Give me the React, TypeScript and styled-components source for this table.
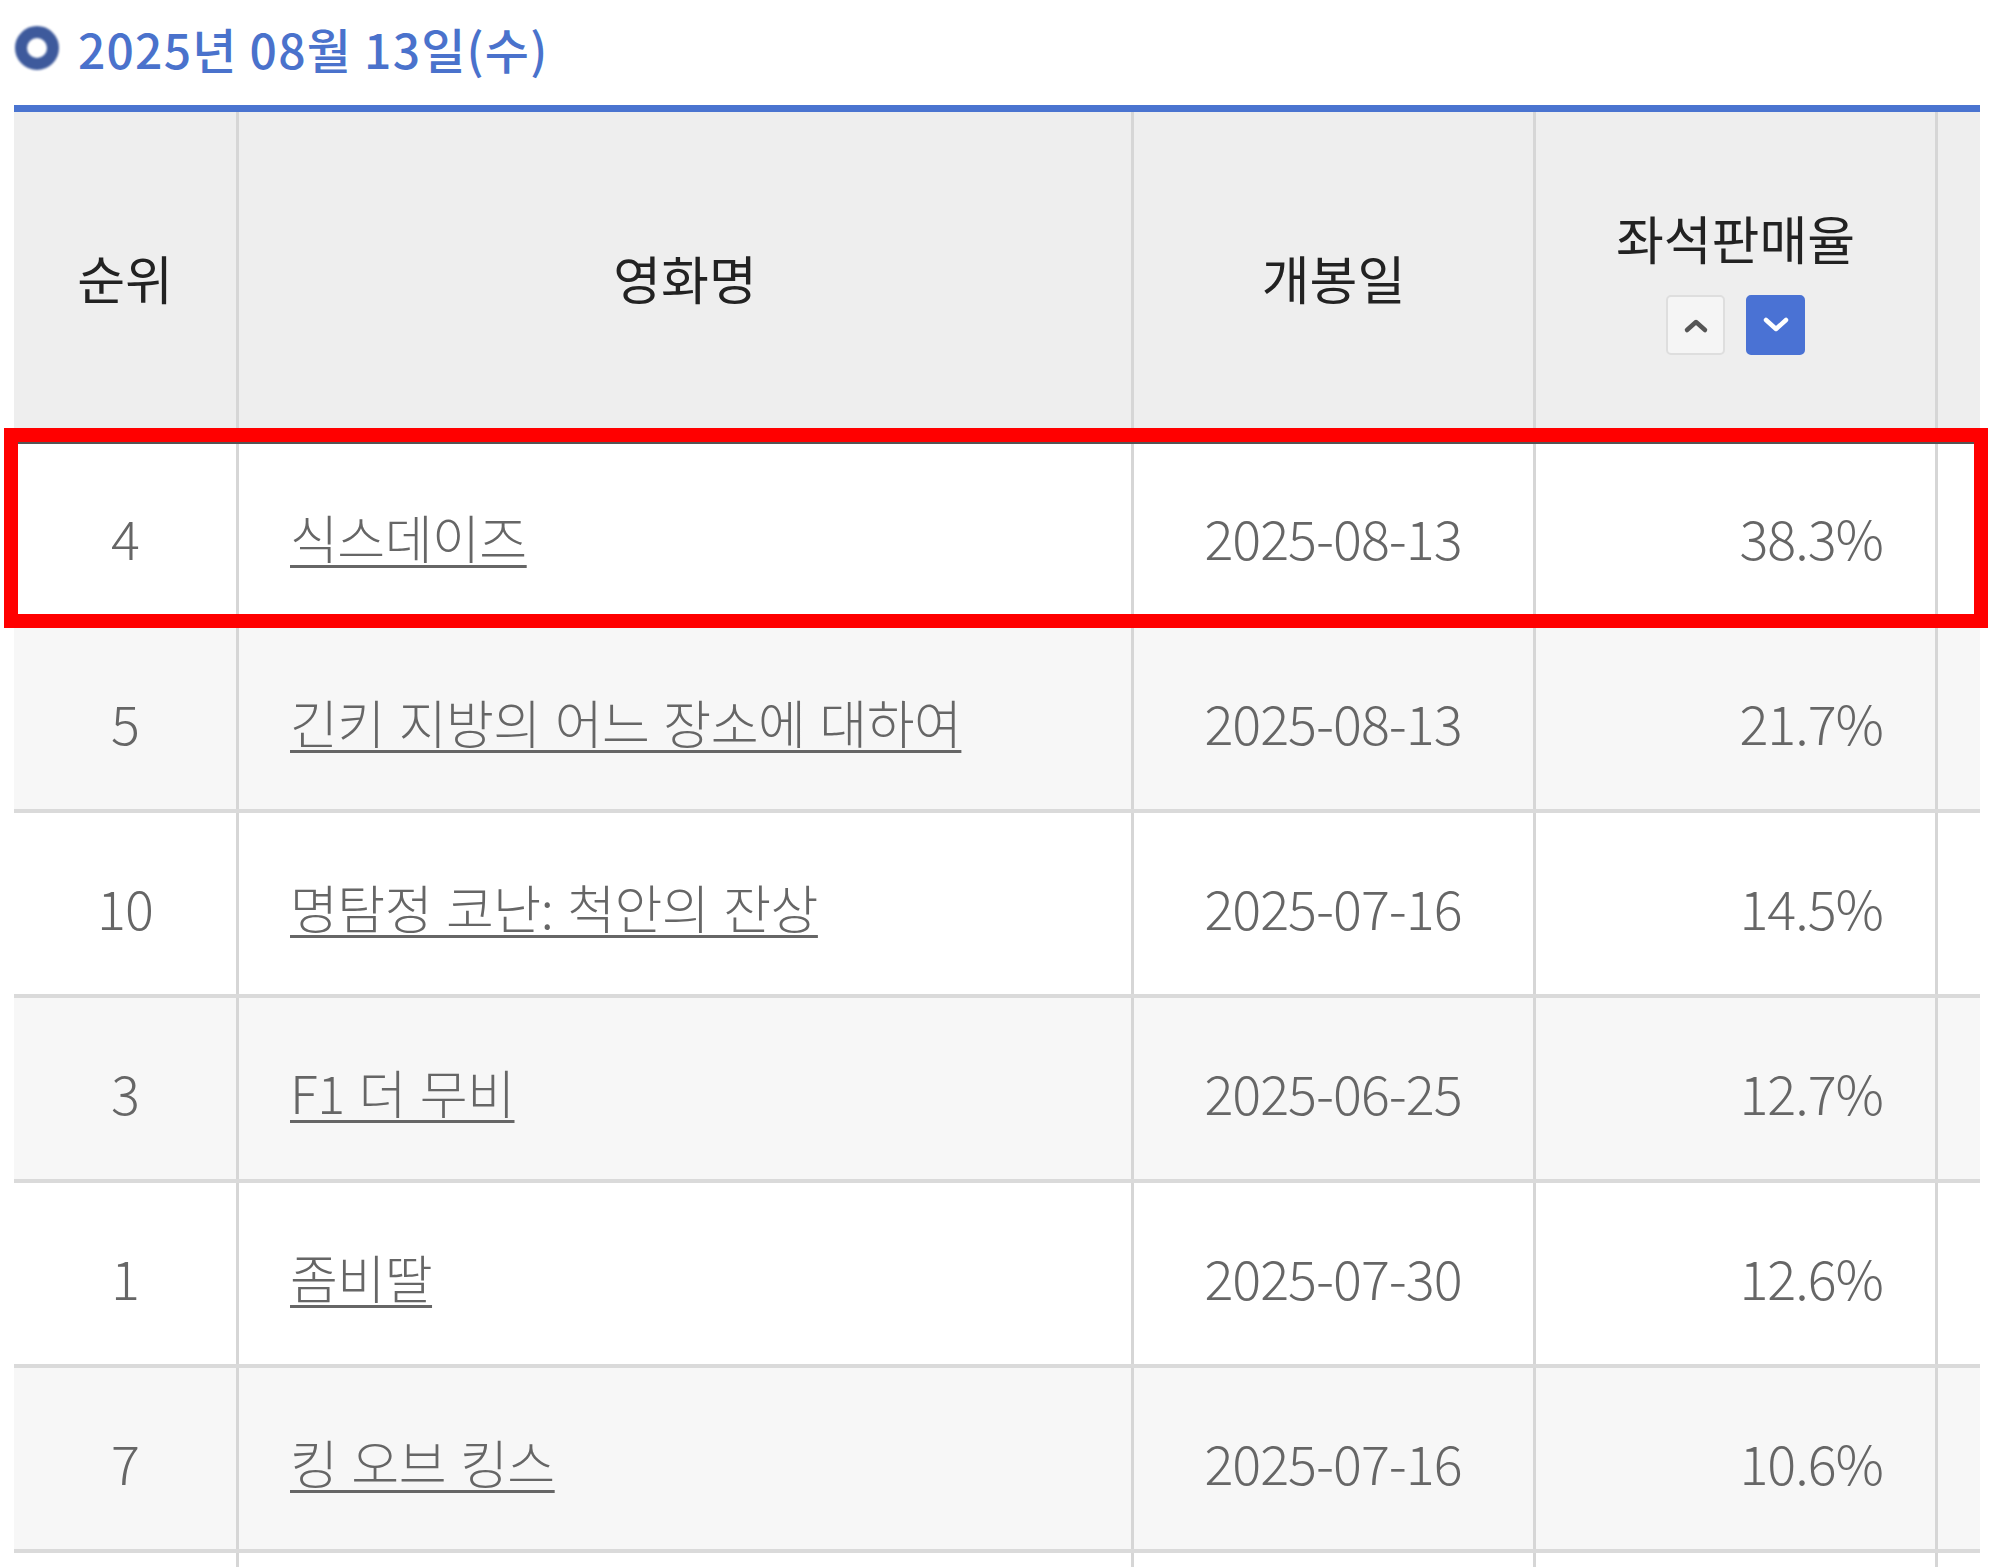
import React from 'react';
import styled, { createGlobalStyle } from 'styled-components';

const GlobalStyle = createGlobalStyle`
  html, body {
    margin: 0;
    padding: 0;
    background: #ffffff;
    overflow: hidden;
  }
  body {
    font-family: "Noto Sans CJK KR", "Noto Sans", sans-serif;
  }
  * {
    box-sizing: border-box;
  }
`;

const COLUMNS = '222px 895px 402px 402px 45px';

const Page = styled.div`
  width: 1989px;
  height: 1567px;
  padding: 0 9px 0 14px;
  overflow: hidden;
`;

const TitleBar = styled.div`
  display: flex;
  align-items: center;
  gap: 18px;
  height: 105px;
  padding-left: 0;
  padding-bottom: 9px;
`;

const DateTitle = styled.h2`
  margin: 0;
  font-size: 48px;
  font-weight: 500;
  color: #4a72cc;
  letter-spacing: 1.2px;
`;

const Table = styled.div`
  border-top: 7px solid #4a74d0;
`;

const HeadRow = styled.div`
  display: grid;
  grid-template-columns: ${COLUMNS};
  height: 331px;
  background: #eeeeee;
`;

const HeadCell = styled.div<{ $first?: boolean }>`
  display: flex;
  flex-direction: column;
  align-items: center;
  justify-content: center;
  gap: 20px;
  border-left: ${p => (p.$first ? 'none' : '3px solid #d6d6d6')};
  font-size: 52px;
  color: #222222;
`;

const SortButtons = styled.div`
  display: flex;
  gap: 21px;
`;

const SortButton = styled.button<{ $active?: boolean }>`
  width: 59px;
  height: 60px;
  padding: 0;
  display: flex;
  align-items: center;
  justify-content: center;
  border-radius: 5px;
  border: 2px solid ${p => (p.$active ? '#4a72d4' : '#dedede')};
  background: ${p => (p.$active ? '#4a72d4' : '#f5f5f5')};
  cursor: pointer;
`;

const Body = styled.div`
  position: relative;
`;

const RowWrap = styled.div`
  position: relative;
`;

const Row = styled.div<{ $shade?: boolean }>`
  display: grid;
  grid-template-columns: ${COLUMNS};
  height: 185px;
  border-bottom: 4px solid #dadada;
  background: ${p => (p.$shade ? '#f7f7f7' : '#ffffff')};
`;

const Cell = styled.div<{ $align?: 'left' | 'center' | 'right'; $first?: boolean }>`
  display: flex;
  align-items: center;
  justify-content: ${p =>
    p.$align === 'left' ? 'flex-start' : p.$align === 'right' ? 'flex-end' : 'center'};
  padding: 6px 52px 0 51px;
  border-left: ${p => (p.$first ? 'none' : '3px solid #d6d6d6')};
  font-size: 54px;
  font-weight: 300;
  color: #666666;
  letter-spacing: -1px;
  white-space: nowrap;
`;

const RankCell = styled(Cell)`
  padding: 6px 0 0 0;
`;

const MovieLink = styled.a`
  color: #666666;
  text-decoration: underline;
  text-decoration-thickness: 3px;
  text-underline-offset: 6px;
  letter-spacing: -0.5px;
  word-spacing: 3px;
  font-size: 52px;
`;

// 빨간 강조 박스 (첫 번째 행 위에 겹침)
const Highlight = styled.div`
  position: absolute;
  top: -15px;
  left: -10px;
  right: -8px;
  bottom: 0;
  border: 14px solid #ff0000;
  box-shadow: inset 0 2px 0 #555555;
  pointer-events: none;
`;

const RingIcon = () => (
  <svg width="46" height="46" viewBox="0 0 46 46" style={{ filter: 'blur(0.8px)' }}>
    <circle cx="23" cy="23" r="16" fill="none" stroke="#3e5a9c" strokeWidth="12" />
  </svg>
);

const Chevron = ({ up, color }: { up?: boolean; color: string }) => (
  <svg width="30" height="20" viewBox="0 0 30 20">
    <polyline
      points={up ? '6,15 15,7 24,15' : '5,5 15,14 25,5'}
      fill="none"
      stroke={color}
      strokeWidth="4.5"
      strokeLinecap="round"
      strokeLinejoin="round"
    />
  </svg>
);

type Movie = {
  rank: number;
  title: string;
  openDate: string;
  rate: string;
};

const movies: Movie[] = [
  { rank: 4, title: '식스데이즈', openDate: '2025-08-13', rate: '38.3%' },
  { rank: 5, title: '긴키 지방의 어느 장소에 대하여', openDate: '2025-08-13', rate: '21.7%' },
  { rank: 10, title: '명탐정 코난: 척안의 잔상', openDate: '2025-07-16', rate: '14.5%' },
  { rank: 3, title: 'F1 더 무비', openDate: '2025-06-25', rate: '12.7%' },
  { rank: 1, title: '좀비딸', openDate: '2025-07-30', rate: '12.6%' },
  { rank: 7, title: '킹 오브 킹스', openDate: '2025-07-16', rate: '10.6%' },
];

const MovieRow = ({ movie, shade }: { movie: Movie; shade: boolean }) => (
  <Row $shade={shade}>
    <RankCell $first>{movie.rank}</RankCell>
    <Cell $align="left">
      <MovieLink href="#">{movie.title}</MovieLink>
    </Cell>
    <Cell>{movie.openDate}</Cell>
    <Cell $align="right">{movie.rate}</Cell>
    <Cell />
  </Row>
);

const App: React.FC = () => {
  const [first, ...rest] = movies;

  return (
    <Page>
      <GlobalStyle />
      <TitleBar>
        <RingIcon />
        <DateTitle>2025년 08월 13일(수)</DateTitle>
      </TitleBar>

      <Table>
        <HeadRow>
          <HeadCell $first>순위</HeadCell>
          <HeadCell>영화명</HeadCell>
          <HeadCell>개봉일</HeadCell>
          <HeadCell>
            좌석판매율
            <SortButtons>
              <SortButton aria-label="오름차순">
                <Chevron up color="#555555" />
              </SortButton>
              <SortButton $active aria-label="내림차순">
                <Chevron color="#ffffff" />
              </SortButton>
            </SortButtons>
          </HeadCell>
          <HeadCell />
        </HeadRow>

        <Body>
          <RowWrap>
            <MovieRow movie={first} shade={false} />
            <Highlight />
          </RowWrap>
          {rest.map((m, i) => (
            <MovieRow key={m.rank} movie={m} shade={i % 2 === 0} />
          ))}
          <Row>
            <Cell $first />
            <Cell />
            <Cell />
            <Cell />
            <Cell />
          </Row>
        </Body>
      </Table>
    </Page>
  );
};

export default App;
